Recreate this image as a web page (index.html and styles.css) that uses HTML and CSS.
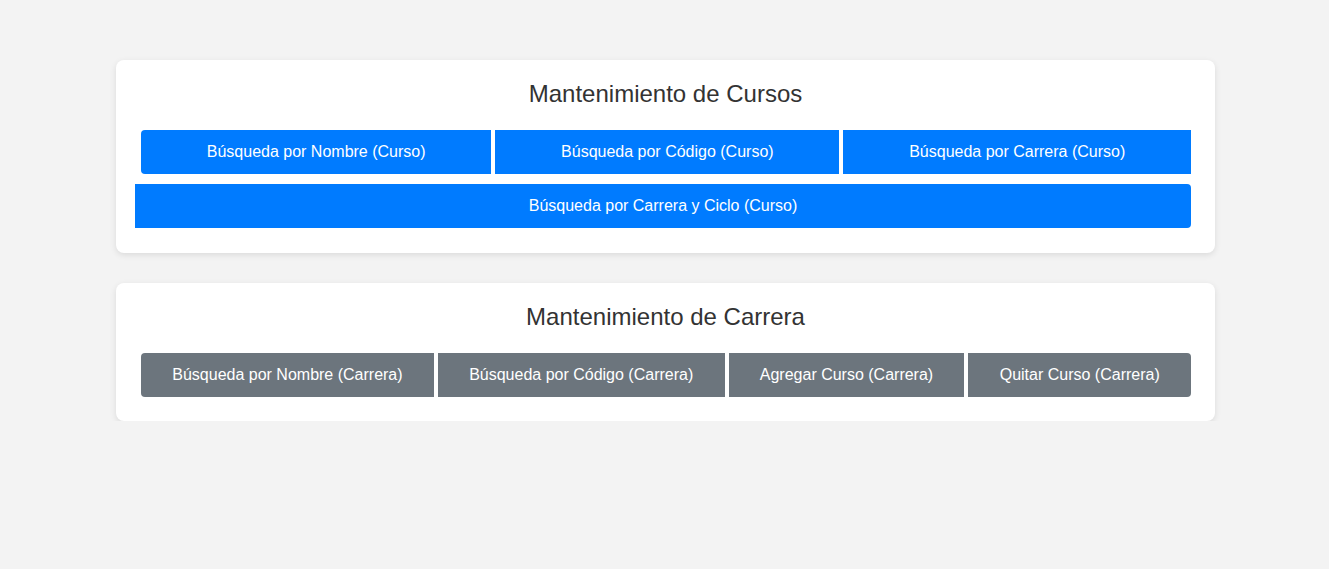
FILE: index.html
```html
<!DOCTYPE html>
<html lang="es">
<head>
<meta charset="utf-8">
<title>Mantenimiento</title>
<link rel="stylesheet" href="styles.css">
</head>
<body>
<main class="container">
  <section class="card">
    <h2 class="card-title">Mantenimiento de Cursos</h2>
    <div class="group">
      <div class="row row-first">
        <button class="btn btn-primary round-left">Búsqueda por Nombre (Curso)</button>
        <button class="btn btn-primary">Búsqueda por Código (Curso)</button>
        <button class="btn btn-primary">Búsqueda por Carrera (Curso)</button>
      </div>
      <div class="row row-wrap">
        <button class="btn btn-primary round-right">Búsqueda por Carrera y Ciclo (Curso)</button>
      </div>
    </div>
  </section>
  <section class="card">
    <h2 class="card-title">Mantenimiento de Carrera</h2>
    <div class="group">
      <div class="row row-first">
        <button class="btn btn-secondary round-left">Búsqueda por Nombre (Carrera)</button>
        <button class="btn btn-secondary">Búsqueda por Código (Carrera)</button>
        <button class="btn btn-secondary">Agregar Curso (Carrera)</button>
        <button class="btn btn-secondary round-right">Quitar Curso (Carrera)</button>
      </div>
    </div>
  </section>
</main>
</body>
</html>
```

FILE: styles.css
```css
html, body {
  margin: 0;
  padding: 0;
}
body {
  background: #f3f3f3;
  font-family: "Liberation Sans", Arial, sans-serif;
  color: #333;
  padding-left: 2px;
}
.container {
  width: 1099px;
  margin: 60px auto 0;
  display: flex;
  flex-direction: column;
  gap: 30px;
}
.card {
  background: #fff;
  border-radius: 8px;
  box-shadow: 0 2px 6px rgba(0, 0, 0, 0.1);
  padding: 20px 24px 24px 24px;
}
.card-title {
  margin: 0 0 22px;
  font-size: 24px;
  line-height: 28px;
  font-weight: normal;
  text-align: center;
  color: #333;
}
.group {
  display: flex;
  flex-direction: column;
  gap: 10px;
}
.row {
  display: flex;
  gap: 4px;
}
.row-first {
  margin-left: 1px;
}
.row-wrap {
  margin-left: -5px;
  margin-bottom: 1px;
}
.btn {
  flex: 1 1 auto;
  height: 44px;
  padding: 0 30px;
  border: none;
  border-radius: 0;
  font-family: "Liberation Sans", Arial, sans-serif;
  font-size: 16px;
  color: #fff;
  cursor: pointer;
  white-space: nowrap;
}
.btn-primary {
  background: #007bff;
}
.btn-secondary {
  background: #6c757d;
}
.round-left {
  border-top-left-radius: 4px;
  border-bottom-left-radius: 4px;
}
.round-right {
  border-top-right-radius: 4px;
  border-bottom-right-radius: 4px;
}
```
